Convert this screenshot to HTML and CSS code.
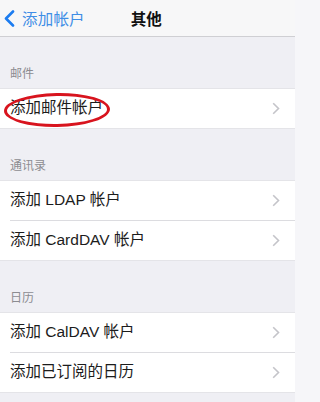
FILE: index.html
```html
<!DOCTYPE html>
<html lang="zh-CN">
<head>
<meta charset="utf-8">
<link rel="stylesheet" href="styles.css">
</head>
<body>
<div class="screen">
  <div class="main">
    <header class="nav">
      <div class="back">
        <svg class="back-icon" width="12" height="17" viewBox="0 0 12 17"><path d="M10 1.5 L3 8.5 L10 15.5" fill="none" stroke="#1c7cf0" stroke-width="2.6" stroke-linecap="round" stroke-linejoin="round"/></svg>
        <span class="back-text">添加帐户</span>
      </div>
      <div class="title">其他</div>
    </header>

    <section class="group">
      <div class="group-label">邮件</div>
      <div class="rows">
        <div class="row first-row">
          <span class="row-text">添加邮件帐户</span>
          <svg class="chev" width="8" height="13" viewBox="0 0 8 13"><path d="M1.2 1.2 L6.5 6.5 L1.2 11.8" fill="none" stroke="#c4c4c9" stroke-width="1.6"/></svg>
          <div class="mark"></div>
        </div>
      </div>
    </section>

    <section class="group">
      <div class="group-label">通讯录</div>
      <div class="rows">
        <div class="row">
          <span class="row-text">添加 LDAP 帐户</span>
          <svg class="chev" width="8" height="13" viewBox="0 0 8 13"><path d="M1.2 1.2 L6.5 6.5 L1.2 11.8" fill="none" stroke="#c4c4c9" stroke-width="1.6"/></svg>
        </div>
        <div class="row">
          <span class="row-text">添加 CardDAV 帐户</span>
          <svg class="chev" width="8" height="13" viewBox="0 0 8 13"><path d="M1.2 1.2 L6.5 6.5 L1.2 11.8" fill="none" stroke="#c4c4c9" stroke-width="1.6"/></svg>
        </div>
      </div>
    </section>

    <section class="group">
      <div class="group-label">日历</div>
      <div class="rows">
        <div class="row">
          <span class="row-text">添加 CalDAV 帐户</span>
          <svg class="chev" width="8" height="13" viewBox="0 0 8 13"><path d="M1.2 1.2 L6.5 6.5 L1.2 11.8" fill="none" stroke="#c4c4c9" stroke-width="1.6"/></svg>
        </div>
        <div class="row">
          <span class="row-text">添加已订阅的日历</span>
          <svg class="chev" width="8" height="13" viewBox="0 0 8 13"><path d="M1.2 1.2 L6.5 6.5 L1.2 11.8" fill="none" stroke="#c4c4c9" stroke-width="1.6"/></svg>
        </div>
      </div>
    </section>
  </div>
  <div class="edge"></div>
</div>
</body>
</html>
```

FILE: styles.css
```css
html, body {
  margin: 0;
  padding: 0;
}
html {
  background: #f6f6f9;
}
body {
  background: #f6f6f9;
  font-family: "Liberation Sans", "Noto Sans CJK SC", sans-serif;
  color: #1a1a1a;
}
.screen {
  display: flex;
  width: 301px;
  height: 402px;
  overflow: hidden;
}
.main {
  width: 295px;
  flex: none;
  background: #efeff4;
}
.edge {
  flex: 1;
  background: #f6f6f9;
}
.nav {
  height: 36px;
  border-bottom: 1px solid #cfcfd3;
  background: #f7f7f8;
  display: flex;
  align-items: center;
}
.back {
  display: flex;
  align-items: center;
  margin-left: 3px;
}
.back-icon {
  display: block;
}
.back-text {
  margin-left: 7px;
  font-size: 15.5px;
  color: #3f8ee6;
  letter-spacing: 0.2px;
}
.title {
  margin-left: 46px;
  font-size: 15.5px;
  font-weight: bold;
  color: #111;
}
.group-label {
  height: 51px;
  box-sizing: border-box;
  display: flex;
  align-items: flex-end;
  padding: 0 0 8px 10px;
  font-size: 12px;
  line-height: 12px;
  color: #8c8c91;
}
.rows {
  background: #fff;
  border-top: 1px solid #e4e4e8;
  border-bottom: 1px solid #e4e4e8;
}
.row {
  position: relative;
  height: 39px;
  margin-left: 10px;
  padding-right: 15px;
  display: flex;
  align-items: center;
  justify-content: space-between;
}
.row + .row {
  border-top: 1px solid #dcdce0;
}
.row-text {
  font-size: 15.5px;
  line-height: 18px;
  margin-top: -1px;
  color: #1c1c1c;
}
.chev {
  display: block;
}
.mark {
  position: absolute;
  left: -6px;
  top: 4px;
  width: 100px;
  height: 28px;
  border: 3px solid #d8141e;
  border-radius: 50%;
  transform: rotate(-1deg);
}
```
